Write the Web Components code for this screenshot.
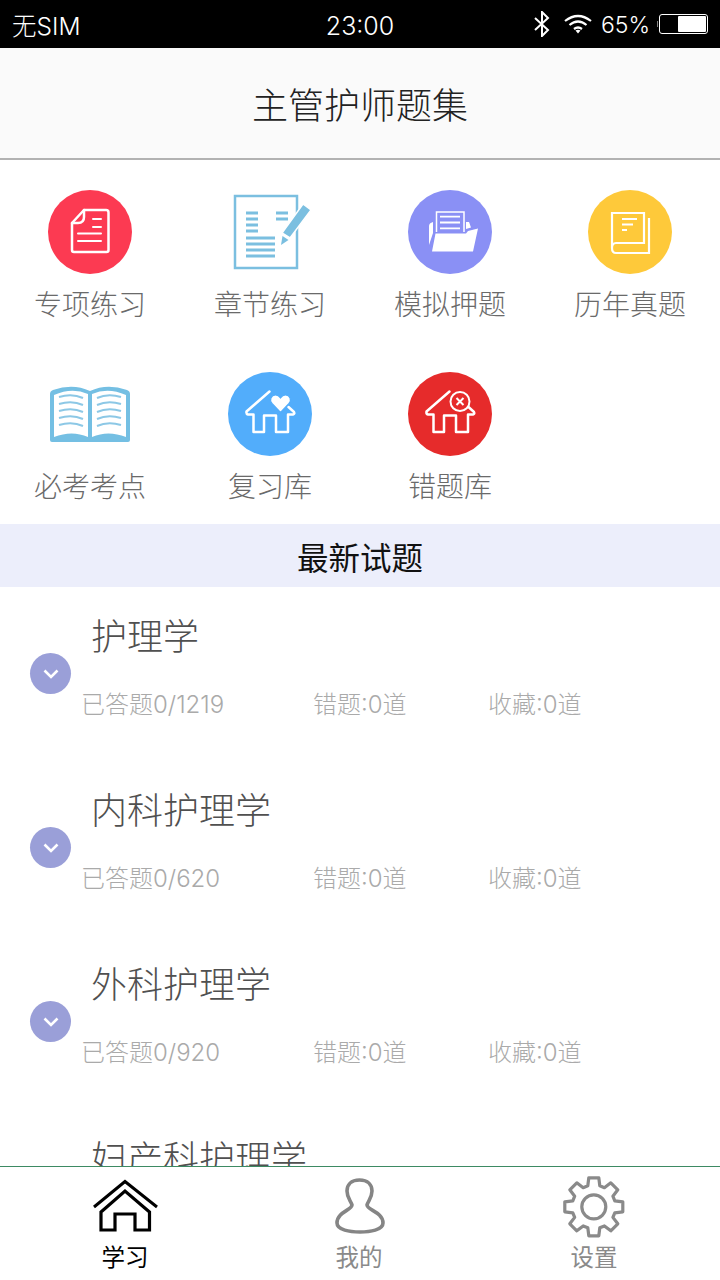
<!DOCTYPE html>
<html lang="zh">
<head>
<meta charset="utf-8">
<title>主管护师题集</title>
<style>
  html, body { margin: 0; padding: 0; background: #fff; }
  body { font-family: "Liberation Sans", "Noto Sans CJK SC", sans-serif; }
  .page { display: flex; flex-direction: column; height: 1280px; overflow: hidden; }
</style>
</head>
<body>
<div class="page">
  <status-bar></status-bar>
  <nav-bar>主管护师题集</nav-bar>

  <feature-grid>
    <feature-tile label="专项练习">
      <svg viewBox="0 0 84 84" width="84" height="84">
        <circle cx="42" cy="42" r="42" fill="#fc3a52"/>
        <g fill="none" stroke="#fff" stroke-width="2.5" stroke-linecap="round" stroke-linejoin="round">
          <path d="M36 20H58a2.500 2.500 0 0 1 2.500 2.500V60a2 2 0 0 1-2 2H26a2 2 0 0 1-2-2V33Z"/>
          <path d="M36 20V27Q36 33 30 33H24"/>
          <path d="M45 29H53M45 37H53M30 43.500H53M30 51H53" stroke-width="2"/>
        </g>
      </svg>
    </feature-tile>
    <feature-tile label="章节练习">
      <svg viewBox="0 0 84 84" width="84" height="84">
        <rect x="7" y="6" width="62" height="72" fill="none" stroke="#7bbfe0" stroke-width="2.500"/>
        <path d="M18 23H30M18 29H30M18 35H30M18 41H30M48 23H60M48 29H60M18 48H47M18 54H47M18 60H47M18 66H47" stroke="#7bbfe0" stroke-width="2.800"/>
        <path d="M75 14L83 20L62 48L54 43Z" fill="#7bbfe0" stroke="#fff" stroke-width="1.500"/>
        <path d="M53 55L54.500 46L60.500 50Z" fill="#7bbfe0"/>
      </svg>
    </feature-tile>
    <feature-tile label="模拟押题">
      <svg viewBox="0 0 84 84" width="84" height="84">
        <circle cx="42" cy="42" r="42" fill="#8a90f5"/>
        <path d="M28.500 42V22H56V42" fill="none" stroke="#fff" stroke-width="1.500"/>
        <path d="M32 26.700H52M32 32.500H52M32 38.300H52" stroke="#fff" stroke-width="1.800"/>
        <path d="M27.500 43.500H58L60 41L70 38.500L65 61.500H24Z" fill="#fff"/>
        <path d="M21 55V36Q21 33 25 32V43Z" fill="#fff"/>
        <path d="M58 32H61L63 37.500L58 39Z" fill="#fff"/>
      </svg>
    </feature-tile>
    <feature-tile label="历年真题">
      <svg viewBox="0 0 84 84" width="84" height="84">
        <circle cx="42" cy="42" r="42" fill="#fec93a"/>
        <g fill="none" stroke="#fff" stroke-width="2.200">
          <path d="M24 58V23H56V53H28Q24 53 24 58Q24 63 28 63H61V28"/>
        </g>
        <path d="M34 29H49M34 34.500H45M34 40H39" stroke="#fff" stroke-width="2.200"/>
      </svg>
    </feature-tile>
    <feature-tile label="必考考点">
      <svg viewBox="0 0 84 84" width="84" height="84">
        <path d="M2 22Q2 19 5 18Q25 11 42 19Q59 11 79 18Q82 19 82 22V68Q82 70 80 70H4Q2 70 2 68Z" fill="#74bfe3"/>
        <path d="M6 23Q24 15 40 22V65Q24 58 6 65ZM44 22Q60 15 78 23V65Q60 58 44 65Z" fill="#fff"/>
        <g fill="none" stroke="#8cc8e6" stroke-width="2">
          <path d="M11 25Q24 21 35 26M11 32Q24 28 35 33M11 39Q24 35 35 40M11 46Q24 42 35 47M11 53Q24 49 35 54"/>
          <path d="M49 26Q60 21 73 25M49 33Q60 28 73 32M49 40Q60 35 73 39M49 47Q60 42 73 46M49 54Q60 49 73 53"/>
        </g>
      </svg>
    </feature-tile>
    <feature-tile label="复习库">
      <svg viewBox="0 0 84 84" width="84" height="84">
        <circle cx="42" cy="42" r="42" fill="#52adfb"/>
        <path d="M41.500 19.500L18.500 39.500Q18 42 20 42.500H25.500V60H36V43.500H48V60H60V42.500H65Q67 42 66 40L60.500 35" fill="none" stroke="#fff" stroke-width="2.500" stroke-linejoin="round" stroke-linecap="round"/>
        <path d="M52.500 40.500L44 31.500C41 28 43 23 47.500 23C50 23 51.500 24.500 52.500 26C53.500 24.500 55 23 57.500 23C62 23 64 28 61 31.500Z" fill="#fff" stroke="#52adfb" stroke-width="1.200"/>
      </svg>
    </feature-tile>
    <feature-tile label="错题库">
      <svg viewBox="0 0 84 84" width="84" height="84">
        <circle cx="42" cy="42" r="42" fill="#e62b2b"/>
        <path d="M41.500 19.500L18.500 39.500Q18 42 20 42.500H25.500V60H36V43.500H48V60H60V42.500H65Q67 42 66 40L60.500 35" fill="none" stroke="#fff" stroke-width="2.500" stroke-linejoin="round" stroke-linecap="round"/>
        <circle cx="52" cy="29.500" r="9.500" fill="#e62b2b" stroke="#fff" stroke-width="2"/>
        <path d="M48.500 26L55.500 33M55.500 26L48.500 33" stroke="#fff" stroke-width="2"/>
      </svg>
    </feature-tile>
  </feature-grid>

  <section-banner>最新试题</section-banner>

  <subject-list>
    <subject-row name="护理学" total="1219"></subject-row>
    <subject-row name="内科护理学" total="620"></subject-row>
    <subject-row name="外科护理学" total="920"></subject-row>
    <subject-row name="妇产科护理学"></subject-row>
  </subject-list>

  <tab-bar>
    <tab-item label="学习" active>
      <svg viewBox="0 0 80 70" width="80" height="70" fill="none" stroke="#000">
        <path d="M9 37L40 11.500L72 37" stroke-width="3"/>
        <path d="M16 42L40 21L64.500 42V60H50V44H30V60H16Z" stroke-width="3.200"/>
      </svg>
    </tab-item>
    <tab-item label="我的">
      <svg viewBox="-1 0 70 75" width="70" height="75" fill="none" stroke="#858585" stroke-width="3.600">
        <path d="M34.500 10C26 10 22 15 22 21C22 28 26 31 27 35C27 40 12 42 12 53C12 60 25 62 35 62C45 62 58 60 58 53C58 42 42 40 42 35C43 31 47 28 47 21C47 15 43 10 34.500 10Z"/>
      </svg>
    </tab-item>
    <tab-item label="设置">
      <svg viewBox="1.500 0 75 75" width="75" height="75" fill="none" stroke="#8a8a8a" stroke-width="3.200" stroke-linejoin="round">
        <g transform="translate(38.300 36.800)">
          <path d="M-6 -21L-5 -29H5L6 -21L10.600 -19.100L17 -24L24 -17L19.100 -10.600L21 -6L29 -5V5L21 6L19.100 10.600L24 17L17 24L10.600 19.100L6 21L5 29H-5L-6 21L-10.600 19.100L-17 24L-24 17L-19.100 10.600L-21 6L-29 5V-5L-21 -6L-19.100 -10.600L-24 -17L-17 -24L-10.600 -19.100Z"/>
          <circle r="12"/>
        </g>
      </svg>
    </tab-item>
  </tab-bar>
</div>

<script>
class StatusBar extends HTMLElement {
  constructor() {
    super();
    this.attachShadow({ mode: 'open' });
  }

  connectedCallback() {
    this.shadowRoot.innerHTML = `
      <style>
        :host {
          display: grid;
          grid-template-columns: 1fr auto 1fr;
          align-items: center;
          flex: none;
          height: 48px;
          padding: 0 12px;
          background: #000;
          color: #fff;
          font: 300 24.5px Inter, "Noto Sans CJK SC", sans-serif;
          box-sizing: border-box;
        }
        .time { font-size: 25px; padding-top: 3px; }
        .right {
          display: flex;
          justify-content: flex-end;
          align-items: center;
        }
        .pct { font-size: 23px; margin: 0 7px 0 9px; padding-top: 2px; }
        .bat { display: block; }
        svg { display: block; }
        .wifi { margin-left: 14px; }
      </style>
      <span>无SIM</span>
      <span class="time">23:00</span>
      <div class="right">
        <svg width="16" height="26" viewBox="0 0 16 26" fill="none" stroke="#fff" stroke-width="2">
          <path d="M1 7L14 19L8 25V1L14 7L1 19"/>
        </svg>
        <svg class="wifi" width="28" height="20" viewBox="0 0 28 20" fill="none" stroke="#fff" stroke-width="2.200">
          <path d="M1 7Q14 -3 27 7M5.500 11Q14 4 22.500 11M10 15Q14 12 18 15"/>
          <path d="M11.500 16.500L14 19.500L16.500 16.500Q14 15 11.500 16.500Z" fill="#fff" stroke="none"/>
        </svg>
        <span class="pct">65%</span>
        <svg class="bat" width="51" height="20" viewBox="0 0 51 20">
          <path d="M0 7V13" stroke="#fff" stroke-width="1"/>
          <rect x="2.500" y="0.500" width="48" height="19" rx="2.500" fill="#000" stroke="#fff"/>
          <rect x="21" y="2" width="28" height="16" rx="1" fill="#fff"/>
        </svg>
      </div>
    `;
  }
}

class NavBar extends HTMLElement {
  constructor() {
    super();
    this.attachShadow({ mode: 'open' });
  }

  connectedCallback() {
    this.shadowRoot.innerHTML = `
      <style>
        :host {
          display: flex;
          align-items: center;
          justify-content: center;
          flex: none;
          height: 112px;
          box-sizing: border-box;
          background: #fafafa;
          border-bottom: 2px solid #b2b2b2;
          color: #222;
          font: 300 36px "Noto Sans CJK SC", sans-serif;
        }
      </style>
      <slot></slot>
    `;
  }
}

class FeatureGrid extends HTMLElement {
  constructor() {
    super();
    this.attachShadow({ mode: 'open' });
  }

  connectedCallback() {
    this.shadowRoot.innerHTML = `
      <style>
        :host {
          display: grid;
          grid-template-columns: repeat(4, 180px);
          grid-auto-rows: 182px;
          flex: none;
          height: 334px;
          padding-top: 30px;
        }
      </style>
      <slot></slot>
    `;
  }
}

class FeatureTile extends HTMLElement {
  constructor() {
    super();
    this.attachShadow({ mode: 'open' });
  }

  connectedCallback() {
    const label = this.getAttribute('label');
    this.shadowRoot.innerHTML = `
      <style>
        :host {
          display: flex;
          flex-direction: column;
          align-items: center;
        }
        .icon { width: 84px; height: 84px; }
        ::slotted(svg) { display: block; overflow: visible; }
        .label {
          margin-top: 8px;
          font: 300 28px/42px "Noto Sans CJK SC", sans-serif;
          color: #6a6a6a;
        }
      </style>
      <div class="icon"><slot></slot></div>
      <div class="label">${label}</div>
    `;
  }
}

class SectionBanner extends HTMLElement {
  constructor() {
    super();
    this.attachShadow({ mode: 'open' });
  }

  connectedCallback() {
    this.shadowRoot.innerHTML = `
      <style>
        :host {
          display: flex;
          align-items: center;
          justify-content: center;
          flex: none;
          height: 63px;
          background: #eceefb;
          color: #111;
          font: 400 31.5px "Noto Sans CJK SC", sans-serif;
        }
      </style>
      <slot></slot>
    `;
  }
}

class SubjectList extends HTMLElement {
  constructor() {
    super();
    this.attachShadow({ mode: 'open' });
  }

  connectedCallback() {
    this.shadowRoot.innerHTML = `
      <style>
        :host {
          display: block;
          flex: 1;
          min-height: 0;
          overflow: hidden;
        }
      </style>
      <slot></slot>
    `;
  }
}

class SubjectRow extends HTMLElement {
  constructor() {
    super();
    this.attachShadow({ mode: 'open' });
  }

  connectedCallback() {
    const name = this.getAttribute('name');
    const total = this.getAttribute('total');
    const stats = total ? `
      <span class="stat">已答题0/${total}</span>
      <span class="stat">错题:0道</span>
      <span class="stat">收藏:0道</span>
    ` : '';
    this.shadowRoot.innerHTML = `
      <style>
        :host {
          display: grid;
          grid-template-columns: 81px 232px 175px 1fr;
          grid-template-rows: 96px 44px;
          height: 174px;
          position: relative;
        }
        .name {
          grid-column: 2 / -1;
          align-self: end;
          padding-left: 10px;
          margin-bottom: 23px;
          font: 300 36px/52px "Noto Sans CJK SC", sans-serif;
          color: #505050;
        }
        .toggle {
          position: absolute;
          left: 30px;
          top: 66px;
          width: 41px;
          height: 41px;
          border-radius: 50%;
          background: #9a9fd8;
          display: flex;
          align-items: center;
          justify-content: center;
        }
        .stat {
          font: 300 24px/44px Inter, "Noto Sans CJK SC", sans-serif;
          color: #aaa;
          grid-row: 2;
          white-space: nowrap;
        }
        .stat:nth-of-type(1) { grid-column: 2; }
        .stat:nth-of-type(2) { grid-column: 3; }
        .stat:nth-of-type(3) { grid-column: 4; }
      </style>
      <div class="toggle">
        <svg width="16" height="10" viewBox="0 0 16 10" fill="none" stroke="#fff" stroke-width="2.600">
          <path d="M1.500 1.500L8 8L14.500 1.500"/>
        </svg>
      </div>
      <div class="name">${name}</div>
      ${stats}
    `;
  }
}

class TabBar extends HTMLElement {
  constructor() {
    super();
    this.attachShadow({ mode: 'open' });
  }

  connectedCallback() {
    this.shadowRoot.innerHTML = `
      <style>
        :host {
          display: grid;
          grid-template-columns: 250px 218px 252px;
          flex: none;
          height: 114px;
          box-sizing: border-box;
          border-top: 1px solid #3d8a63;
          background: #fff;
        }
      </style>
      <slot></slot>
    `;
  }
}

class TabItem extends HTMLElement {
  constructor() {
    super();
    this.attachShadow({ mode: 'open' });
  }

  connectedCallback() {
    const label = this.getAttribute('label');
    this.shadowRoot.innerHTML = `
      <style>
        :host {
          display: flex;
          flex-direction: column;
          align-items: center;
          color: #8a8a8a;
          font: 400 23.5px/32px "Noto Sans CJK SC", sans-serif;
        }
        :host([active]) { color: #000; }
        .icon {
          height: 70px;
          margin-top: 3px;
        }
        ::slotted(svg) { display: block; }
      </style>
      <div class="icon"><slot></slot></div>
      <div class="label">${label}</div>
    `;
  }
}

customElements.define('status-bar', StatusBar);
customElements.define('nav-bar', NavBar);
customElements.define('feature-grid', FeatureGrid);
customElements.define('feature-tile', FeatureTile);
customElements.define('section-banner', SectionBanner);
customElements.define('subject-list', SubjectList);
customElements.define('subject-row', SubjectRow);
customElements.define('tab-bar', TabBar);
customElements.define('tab-item', TabItem);
</script>
</body>
</html>
